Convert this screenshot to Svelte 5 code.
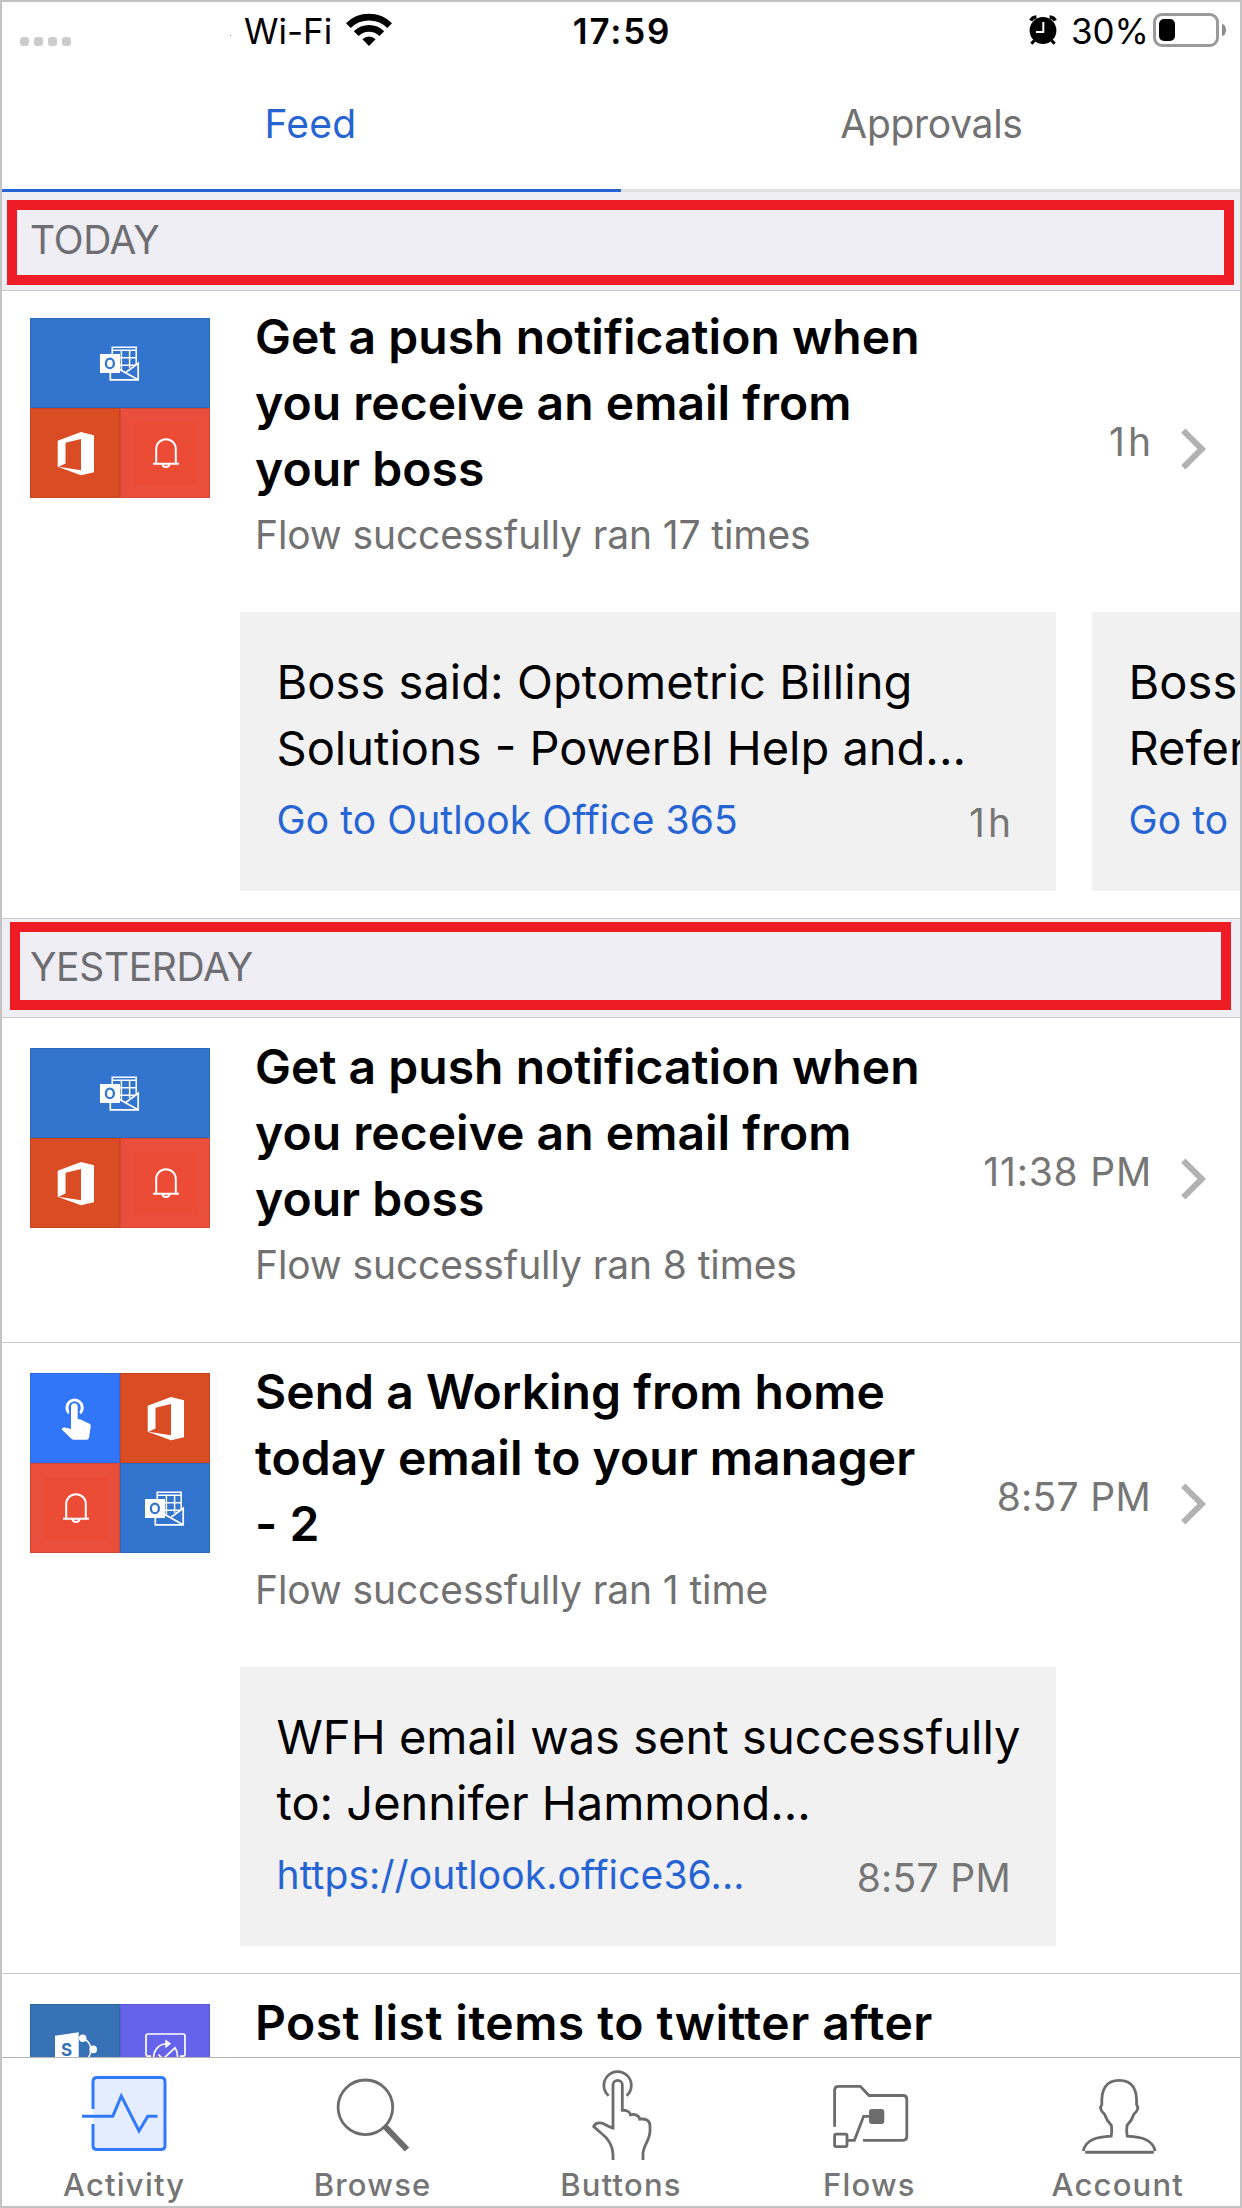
<script>
  const sections = [
    {
      label: 'TODAY',
      mark: 'first',
      rows: [
        {
          tiles: ['outlook', 'office', 'bell'],
          title: 'Get a push notification when you receive an email from your boss',
          sub: 'Flow successfully ran 17 times',
          time: '1h',
          timeFit: 'short',
          cards: [
            { text: 'Boss said: Optometric Billing\nSolutions - PowerBI Help and...', link: 'Go to Outlook Office 365', time: '1h' },
            { text: 'Boss\nRefer', link: 'Go to', time: '' }
          ]
        }
      ]
    },
    {
      label: 'YESTERDAY',
      mark: 'second',
      rows: [
        {
          tiles: ['outlook', 'office', 'bell'],
          title: 'Get a push notification when you receive an email from your boss',
          sub: 'Flow successfully ran 8 times',
          time: '11:38 PM',
          timeFit: 'long',
          cards: []
        },
        {
          tiles: ['touch', 'office', 'bell', 'outlook'],
          title: 'Send a Working from home today email to your manager - 2',
          sub: 'Flow successfully ran 1 time',
          time: '8:57 PM',
          timeFit: '',
          cards: [
            { text: 'WFH email was sent successfully\nto: Jennifer Hammond...', link: 'https://outlook.office36...', time: '8:57 PM' }
          ]
        },
        {
          tiles: ['sharepoint', 'approval'],
          title: 'Post list items to twitter after',
          loose: true,
          sub: '',
          time: '',
          timeFit: '',
          cards: []
        }
      ]
    }
  ];
  const tabs = ['Activity', 'Browse', 'Buttons', 'Flows', 'Account'];
</script>

{#snippet tile(kind)}
  <svg viewBox="0 0 90 90" width="90" height="90">
    {#if kind === 'outlook'}
      <g fill="none" stroke="#fff" stroke-width="1.5">
        <path d="M37.2 37V29.2H61.2V46" />
        <path d="M37 32.2H61M45 39.7H61M45 47.2H61M46.4 32V53M54.6 32V50" />
        <path d="M35.3 55V61.9H63.2V45.2L50.5 54.6M44.8 51.5L62.6 61.5" stroke-width="1.7" />
      </g>
      <rect x="25" y="36" width="20" height="19" fill="#fff" />
      <ellipse cx="34.9" cy="45.4" rx="4" ry="4.8" fill="none" stroke="#3375ce" stroke-width="2.3" />
    {:else if kind === 'office'}
      <path fill="#fff" fill-rule="evenodd" d="M27.7 32.7L51 24L64 27.3V64.3L51 67.3L27.7 58.8ZM35.5 34.7V55.6L28.6 58.8L51 62.3V31Z" />
    {:else if kind === 'bell'}
      <rect x="14" y="14" width="63" height="63" fill="#ec4b35" />
      <g fill="none" stroke="#fff" stroke-width="2">
        <path d="M36.2 55.5V41A9.8 9.8 0 0 1 55.8 41V55.5" />
        <path d="M33 55.8H59M42.4 56A3.7 4 0 0 0 49.6 56" />
      </g>
    {:else if kind === 'touch'}
      <path d="M39.2 40.2A7.7 7.7 0 1 1 50 40.2" fill="none" stroke="#fff" stroke-width="3" />
      <path d="M41 56V33.6A3.35 3.35 0 0 1 47.7 33.6V46L50 46.3L59.6 50.7Q61 51.5 60.8 53L59 64.8Q58.6 66.8 56.5 66.8H43.8Q42.4 66.8 41.4 65.8L31.6 56.3L32.7 55Q33.6 54.2 35 54.5Z" fill="#fff" />
      <path d="M39.9 41V33.6A4.45 4.45 0 0 1 48.8 33.6V41" fill="none" stroke="#3176f9" stroke-width="1.4" />
    {:else if kind === 'sharepoint'}
      <g fill="none" stroke="#fff" stroke-width="1.4"><path d="M53 34.5A12 12 0 0 1 53 57" /></g>
      <path d="M25 31.7L48.7 28.3V65L25 62Z" fill="#fff" />
      <circle cx="52.7" cy="34.3" r="3.7" fill="#fff" />
      <circle cx="63.2" cy="45.4" r="3.8" fill="#fff" />
      <circle cx="52.7" cy="56.6" r="3.7" fill="#fff" />
      <text class="glyph" x="36.6" y="51.5" text-anchor="middle">S</text>
    {:else}
      <g fill="none" stroke="#fff" stroke-width="1.7">
        <path d="M31 52.2H28Q26 52.2 26 50.2V32Q26 30 28 30H63Q65 30 65 32V50.2Q65 52.2 63 52.2H60" />
        <path d="M33.8 55A12.5 13 0 0 1 46 40M38.5 50.5L43 55L55 43.8Q58 48 57.5 54" />
      </g>
      <path d="M45.3 35.3L51 39.8L45.3 44.3Z" fill="#fff" />
    {/if}
  </svg>
{/snippet}

{#snippet tabIcon(name)}
  <svg viewBox="0 0 96 97" width="96" height="97" fill="none" stroke="#6c6c6c" stroke-width="2.8">
    {#if name === 'Activity'}
      <rect x="17" y="13.5" width="72" height="72" rx="4" fill="#e3edfe" stroke="none" />
      <g stroke="#3179f8" stroke-width="3">
        <path d="M17 45V17.5Q17 13.5 21 13.5H85Q89 13.5 89 17.5V81.5Q89 85.5 85 85.5H21Q17 85.5 17 81.5V60" />
        <path d="M6 52.3H36.8L45.3 32L63 67L71.8 52.3H81.5" />
      </g>
    {:else if name === 'Browse'}
      <circle cx="40.4" cy="43.3" r="27.3" />
      <path d="M59.5 62L82 85.5" stroke-width="6" />
    {:else if name === 'Buttons'}
      <path d="M35.6 31.7A13.7 13.7 0 1 1 53.6 31.7" />
      <path d="M40 96V90C39.5 81 34 73.5 28 69L20.7 62.5C22 59 27 57.8 31 60C34 61.8 36.5 63.4 40 64V21A4.65 4.65 0 0 1 49.3 21V46.3C53 46 57 47.5 57.5 50.8C61.5 49.8 66 51.2 66.8 55.2C72 54.5 77 55.5 77 62V67C77 76 70 82 70 90V96" />
    {:else if name === 'Flows'}
      <path d="M13.6 62.7V26.3Q13.6 22.3 17.6 22.3H39.3L48 31.5H82Q85.8 31.5 85.8 35.3V72.5Q85.8 76.3 82 76.3H42" />
      <rect x="13.6" y="70.2" width="12.4" height="12.4" rx="1.5" />
      <path d="M27 76.3H33.4L42.6 52.3H49" />
      <rect x="48" y="45" width="15.3" height="15" rx="3" fill="#6c6c6c" stroke="none" />
    {:else}
      <path d="M13.2 87C16 75 27 73.2 41.2 72.2Q42.2 67 41.4 61.5Q36.5 56.5 34.4 50Q28.5 45 31.8 40.6C31.2 26 35.5 16.4 49.2 16.4C62.9 16.4 67.2 26 66.6 40.6Q69.9 45 64 50Q61.9 56.5 57 61.5Q56.2 67 57.2 72.2C71.4 73.2 82.4 75 85.2 87" />
      <path d="M15.2 88.3H83.8" stroke-width="3" />
    {/if}
  </svg>
{/snippet}

<div class="screen">
  <header class="status">
    <div class="status-left">
      <div class="dots"><i></i><i></i><i></i><i></i></div>
      <b class="speck"></b>
      <span class="status-text">Wi-Fi</span>
      <svg class="wifi" viewBox="0 0 46 34" width="46" height="34">
        <g fill="none" stroke="#000" stroke-width="6.8">
          <path d="M2.4 12.6A29.5 29.5 0 0 1 43.6 12.6" />
          <path d="M10.2 20.6A18.3 18.3 0 0 1 35.8 20.6" />
        </g>
        <path d="M23 33L16.4 26.3A9.4 9.4 0 0 1 29.6 26.3Z" />
      </svg>
    </div>
    <div class="clock">17:59</div>
    <div class="status-right">
      <svg class="alarm" viewBox="0 0 28 30" width="28" height="30">
        <circle cx="14" cy="15.5" r="13.4" />
        <g stroke="#000" stroke-width="3.4" fill="none">
          <path d="M1.8 5.6Q3.2 2.2 7.4 2M26.2 5.6Q24.8 2.2 20.6 2" />
          <path d="M5.4 25.4L2.4 28.8M22.6 25.4L25.6 28.8" stroke-width="3" />
        </g>
        <path d="M14.3 7V17H7" fill="none" stroke="#fff" stroke-width="2" />
      </svg>
      <span class="status-text">30%</span>
      <div class="battery"><div class="level"></div></div>
      <div class="nub"></div>
    </div>
  </header>

  <nav class="switch">
    <div class="on">Feed</div>
    <div class="off">Approvals</div>
  </nav>

  <main>
    {#each sections as s}
      <h2>{s.label}<span class="mark {s.mark}"></span></h2>
      {#each s.rows as r}
        <section class="row {s.mark}">
          <div class="head">
            <div class="tiles" class:three={r.tiles.length === 3}>
              {#each r.tiles as t}<div class="tile {t}">{@render tile(t)}</div>{/each}
            </div>
            <div class="body">
              <h3 class:loose={r.loose}>{r.title}</h3>
              <p>{r.sub}</p>
            </div>
            {#if r.time}
              <div class="meta">
                <time class={r.timeFit}>{r.time}</time>
                <svg class="chevron" viewBox="0 0 26 42" width="26" height="42">
                  <path d="M2.3 2.7L20.8 21L2.3 39.3" fill="none" stroke="#b2b2b2" stroke-width="6" />
                </svg>
              </div>
            {/if}
          </div>
          {#if r.cards.length}
            <div class="cards">
              {#each r.cards as c}
                <article>
                  <div class="text">{c.text}</div>
                  <div class="foot"><span class="link">{c.link}</span><time class:short={c.time === '1h'}>{c.time}</time></div>
                </article>
              {/each}
            </div>
          {/if}
        </section>
      {/each}
    {/each}
  </main>

  <footer>
    {#each tabs as t}
      <div class="tab">{@render tabIcon(t)}<span>{t}</span></div>
    {/each}
  </footer>
  <div class="frame"></div>
</div>

<style>
  .screen {
    position: relative;
    box-sizing: border-box;
    width: 1242px;
    height: 2208px;
    overflow: hidden;
    display: flex;
    flex-direction: column;
    background: #fff;
    color: #000;
    font-family: Inter, 'Liberation Sans', sans-serif;
    font-size: 39px;
  }
  svg { display: block; flex: none; }
  .frame {
    position: absolute;
    inset: 0;
    border: 2px solid #c3c3c3;
    pointer-events: none;
  }
  .status {
    height: 60px;
    flex: none;
    display: grid;
    grid-template-columns: 1fr auto 1fr;
    align-items: center;
    font-size: 35px;
    line-height: 44px;
  }
  .status-left, .status-right { display: flex; align-items: center; }
  .status-left { padding-left: 20px; }
  .status-right { justify-content: flex-end; padding-right: 16px; }
  .status-text, .clock { padding-top: 2px; }
  .dots { display: flex; gap: 5px; padding-top: 23px; }
  .dots i { width: 9px; height: 9px; border-radius: 3px; background: #cbcbcb; }
  .speck { width: 1px; height: 1px; margin: 10px 13px 0 159px; background: #888; }
  .wifi { margin-left: 14px; }
  .clock { font-weight: 600; letter-spacing: 1.8px; padding-left: 2px; }
  .alarm { margin-right: 14px; }
  .battery {
    box-sizing: border-box;
    width: 66px;
    height: 34px;
    margin-left: 4px;
    padding: 3px;
    border: 3px solid #9a9a9a;
    border-radius: 9px;
  }
  .level { width: 16px; height: 22px; border-radius: 5px; background: #000; }
  .nub { width: 4px; height: 12px; margin-left: 3px; border-radius: 0 4px 4px 0 / 0 6px 6px 0; background: #8c8c8c; }

  .switch { height: 132px; flex: none; display: grid; grid-template-columns: 1fr 1fr; }
  .switch div {
    display: flex;
    align-items: center;
    justify-content: center;
    padding-bottom: 2px;
    border-bottom: 3px solid #e0e0e1;
    color: #717171;
    letter-spacing: -0.3px;
  }
  .switch .on { color: #2764d3; border-color: #2764d3; letter-spacing: 0.25px; }

  main { flex: 1; min-height: 0; overflow: hidden; }
  h2 {
    position: relative;
    display: flex;
    align-items: center;
    box-sizing: border-box;
    height: 99px;
    margin: 0;
    padding: 0 30px 3px;
    border-bottom: 1px solid #c8c7cc;
    background: #efeef4;
    color: #6d6d72;
    font-size: 39px;
    font-weight: 400;
    letter-spacing: -0.35px;
  }
  .mark { position: absolute; border: 10px solid #ee1c25; }
  .mark.first { inset: 8px 8px 5px 7px; }
  .mark.second { inset: 3px 11px 7px 10px; }

  .row { border-bottom: 1px solid #c8c7cc; padding-top: 16px; }
  .row.first { padding-top: 13px; }
  .head { display: flex; align-items: flex-start; height: 308px; padding: 0 35px 0 30px; }
  .tiles { width: 180px; margin: 14px 45px 0 0; display: grid; grid-template-columns: 90px 90px; grid-auto-rows: 90px; flex: none; }
  .tile { display: flex; justify-content: center; box-shadow: inset 0 0 0 1px rgba(0, 0, 0, 0.09); }
  .three .tile:first-child { grid-column: span 2; }
  .outlook { background: #3375ce; }
  .office { background: #da4c23; }
  .bell { background: #ea4e3d; }
  .touch { background: #3176f9; }
  .sharepoint { background: #3872b6; }
  .approval { background: #6563ea; }
  .glyph { font: 700 17px Inter, sans-serif; fill: #3872b6; }
  .body { width: 681px; flex: none; }
  h3 { margin: 0; font-size: 48px; line-height: 66px; font-weight: 600; letter-spacing: 0.04px; }
  h3.loose { letter-spacing: 0.46px; }
  p { margin: 8px 0 0; line-height: 50px; color: #717171; letter-spacing: -0.11px; white-space: nowrap; }
  .meta { flex: 1; display: flex; align-items: flex-start; justify-content: flex-end; }
  time { color: #767676; line-height: 50px; white-space: nowrap; letter-spacing: 0.3px; }
  time.short { letter-spacing: 3px; margin-right: -3px; }
  time.long { letter-spacing: 0.8px; margin-right: -1px; }
  .meta time { margin-top: 113px; }
  .chevron { margin: 124px 0 0 30px; }

  .cards { display: flex; gap: 36px; margin: 0 0 27px 240px; }
  article {
    box-sizing: border-box;
    width: 816px;
    height: 279px;
    flex: none;
    padding: 37px 45px 0 36.5px;
    background: #f1f1f1;
  }
  .text { font-size: 47px; line-height: 66px; white-space: pre; }
  .text::first-line { letter-spacing: 0.05px; }
  .foot { display: flex; justify-content: space-between; margin-top: 14px; line-height: 50px; }
  .foot time { padding-top: 3px; }
  .link { color: #2764d3; letter-spacing: 0.1px; }

  footer {
    box-sizing: border-box;
    height: 151px;
    flex: none;
    display: grid;
    grid-template-columns: repeat(5, 1fr);
    border-top: 1px solid #b5b5b5;
    background: #fff;
  }
  .tab { display: flex; flex-direction: column; align-items: center; padding-top: 6px; }
  .tab span { margin-top: 4px; font-size: 31px; line-height: 40px; font-weight: 500; letter-spacing: 1.2px; color: #757575; }
</style>
